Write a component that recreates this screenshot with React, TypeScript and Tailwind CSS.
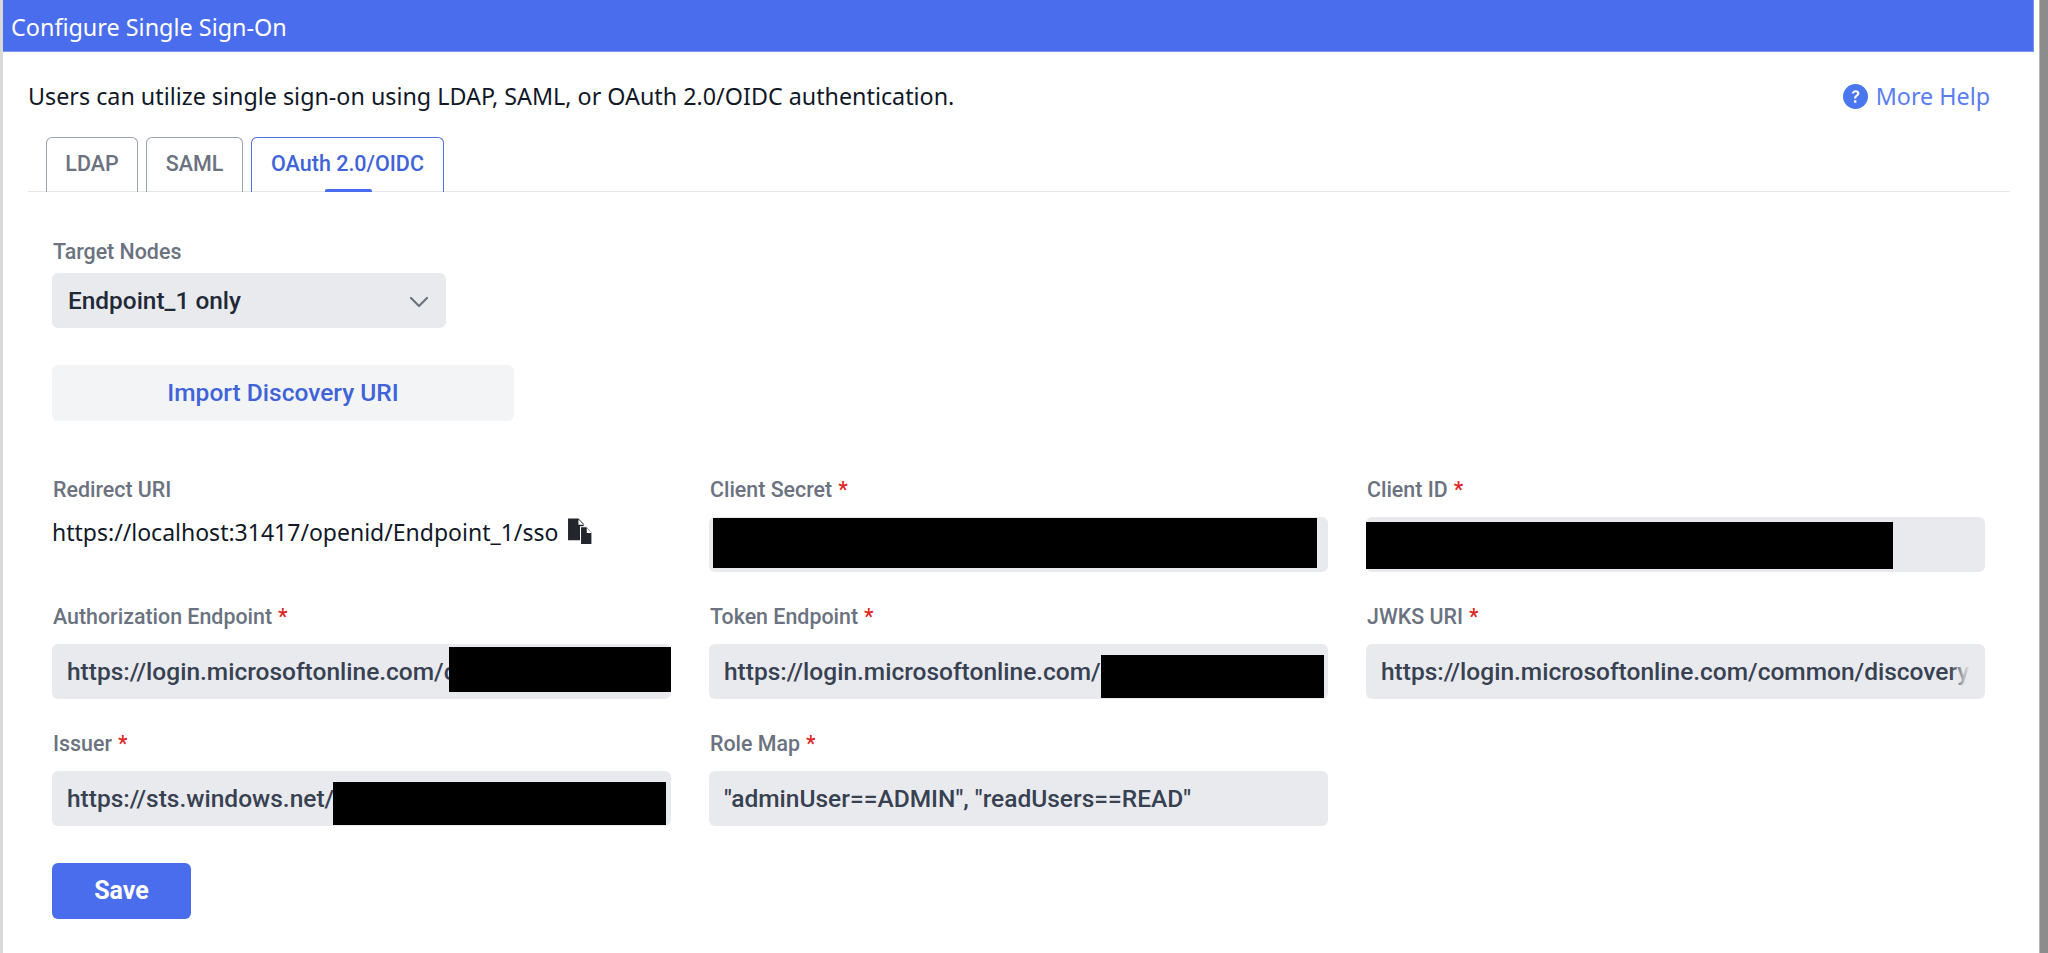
const sans = "font-['Noto_Sans',sans-serif]";
const ui = "font-['Roboto',sans-serif]";

function Req() {
  return <span className="text-[#e02424] ml-[6px]">*</span>;
}

function Label({ text, req }: { text: string; req?: boolean }) {
  return (
    <div className={`${ui} h-[26px] leading-[26px] text-[21.4px] font-medium text-[#6b7280] pl-[1px] mb-[14px]`}>
      {text}
      {req && <Req />}
    </div>
  );
}

function Redact({ className }: { className: string }) {
  return <div className={`absolute bg-black ${className}`} />;
}

function Field({ label, value, fade, children }: { label: string; value?: string; fade?: boolean; children?: React.ReactNode }) {
  return (
    <div className="h-[127px]">
      <Label text={label} req />
      <div className={`${ui} relative h-[55px] rounded-[6px] bg-[#e9eaee] px-[15px] pt-[2px] flex items-center text-[24.5px] font-medium text-[#374151] whitespace-nowrap`}>
        <div className="overflow-hidden w-full">{value}</div>
        {fade && <div className="absolute right-[15px] top-0 w-[20px] h-full bg-linear-to-r from-transparent to-[#e9eaee]" />}
        {children}
      </div>
    </div>
  );
}

function CopyIcon() {
  return (
    <svg width="26" height="28" viewBox="0 0 25 26" className="ml-[9px] mt-[-3px] shrink-0">
      <path d="M1 1h10l5 5v3h-3v13H1z" fill="#23262d" />
      <path d="M11 2v5h5z" fill="#fff" />
      <path d="M13 9h6l5 5v12H13z" fill="#23262d" stroke="#fff" strokeWidth="1" />
      <path d="M19 10v5h5z" fill="#fff" />
    </svg>
  );
}

function Tab({ text, active, w }: { text: string; active?: boolean; w: string }) {
  return (
    <div className={`${ui} relative ${w} h-[55px] mb-[-1px] border border-b-0 rounded-t-[6px] flex items-center justify-center text-[21.5px] font-medium pb-[2px] ${active ? "border-[#4f6fe8] text-[#4063d8]" : "border-[#9ca3af] text-[#6b7280]"}`}>
      {text}
      {active && <div className="absolute bottom-0 left-[73px] w-[47px] h-[3px] rounded-t-[2px] bg-[#4a6cee]" />}
    </div>
  );
}

export default function App() {
  return (
    <div className="h-[953px] w-[2048px] bg-white flex overflow-hidden">
      <div className="w-[3px] bg-[#d9d9d9] shrink-0" />
      <div className="w-[2031px] shrink-0">
        <div className={`${sans} h-[52px] bg-[#4a6ded] border-r border-b border-[#7d96f2] text-white text-[23.4px] leading-[54px] pl-[8px]`}>Configure Single Sign-On</div>
        <div className="pl-[25px] pr-[24px]">
          <div className={`${sans} flex justify-between items-center h-[30px] mt-[29px] text-[23.3px]`}>
            <span className="text-[#111827]">Users can utilize single sign-on using LDAP, SAML, or OAuth 2.0/OIDC authentication.</span>
            <span className="flex items-center text-[#5a7df0] mr-[20px]">
              <svg width="25" height="25" viewBox="0 0 24 24" className="mr-[8px]">
                <circle cx="12" cy="12" r="12" fill="#4a77ee" />
                <path d="M8.4 9.2c.2-2 1.7-3.2 3.7-3.2 2.1 0 3.6 1.2 3.6 3 0 1.4-.8 2.1-1.8 2.8-.8.5-1.1.9-1.1 1.8v.4h-2.1v-.6c0-1.3.5-2 1.5-2.7.8-.5 1.3-.9 1.3-1.6 0-.8-.6-1.3-1.5-1.3s-1.5.6-1.6 1.4zM10.6 15.6h2.2v2.3h-2.2z" fill="#fff" />
              </svg>
              More Help
            </span>
          </div>
          <div className="flex gap-[8px] mt-[26px] pl-[18px] border-b border-[#e5e7eb] w-[1982px] h-[55px]">
            <Tab text="LDAP" w="w-[92px]" />
            <Tab text="SAML" w="w-[97px]" />
            <Tab text="OAuth 2.0/OIDC" active w="w-[193px]" />
          </div>
          <div className="pl-[24px] pr-[24px]">
            <div className={`${ui} mt-[47px] h-[26px] leading-[26px] text-[21.4px] font-medium text-[#6b7280] pl-[1px]`}>Target Nodes</div>
            <div className={`${ui} mt-[8px] w-[394px] h-[55px] rounded-[6px] bg-[#e9eaee] flex items-center justify-between pl-[16px] pr-[17px] pt-[2px] text-[24.4px] font-medium text-[#1f2937]`}>
              Endpoint_1 only
              <svg width="20" height="20" viewBox="0 0 20 20" fill="none" stroke="#6b7280" strokeWidth="2.2" strokeLinecap="round" strokeLinejoin="round">
                <path d="M2 6l8 8 8-8" />
              </svg>
            </div>
            <div className={`${ui} mt-[37px] w-[462px] h-[56px] rounded-[6px] bg-[#f3f4f6] flex items-center justify-center text-[24.5px] font-medium text-[#4063d8]`}>Import Discovery URI</div>
            <div className="grid grid-cols-[619px_619px_619px] gap-x-[38px] mt-[56px]">
              <div className="h-[127px]">
                <Label text="Redirect URI" />
                <div className={`${sans} flex items-center h-[30px] text-[23px] text-[#111827]`}>
                  https://localhost:31417/openid/Endpoint_1/sso
                  <CopyIcon />
                </div>
              </div>
              <Field label="Client Secret">
                <Redact className="left-[4px] top-[1px] w-[604px] h-[50px]" />
              </Field>
              <Field label="Client ID">
                <Redact className="left-0 top-[5px] w-[527px] h-[47px]" />
              </Field>
              <Field label="Authorization Endpoint" value="https://login.microsoftonline.com/c">
                <Redact className="left-[397px] top-[3px] w-[222px] h-[45px]" />
              </Field>
              <Field label="Token Endpoint" value="https://login.microsoftonline.com/">
                <Redact className="left-[392px] top-[11px] w-[223px] h-[43px]" />
              </Field>
              <Field label="JWKS URI" value="https://login.microsoftonline.com/common/discovery" fade />
              <Field label="Issuer" value="https://sts.windows.net/">
                <Redact className="left-[281px] top-[11px] w-[333px] h-[43px]" />
              </Field>
              <Field label="Role Map" value={'"adminUser==ADMIN", "readUsers==READ"'} />
            </div>
            <div className={`${ui} mt-[5px] w-[139px] h-[56px] rounded-[6px] bg-[#4a6ded] flex items-center justify-center text-white text-[25px] font-bold`}>Save</div>
          </div>
        </div>
      </div>
      <div className="w-[5px] shrink-0" />
      <div className="w-[9px] bg-[#8c8c8c] border-l border-[#b5b5b5] shrink-0" />
    </div>
  );
}
